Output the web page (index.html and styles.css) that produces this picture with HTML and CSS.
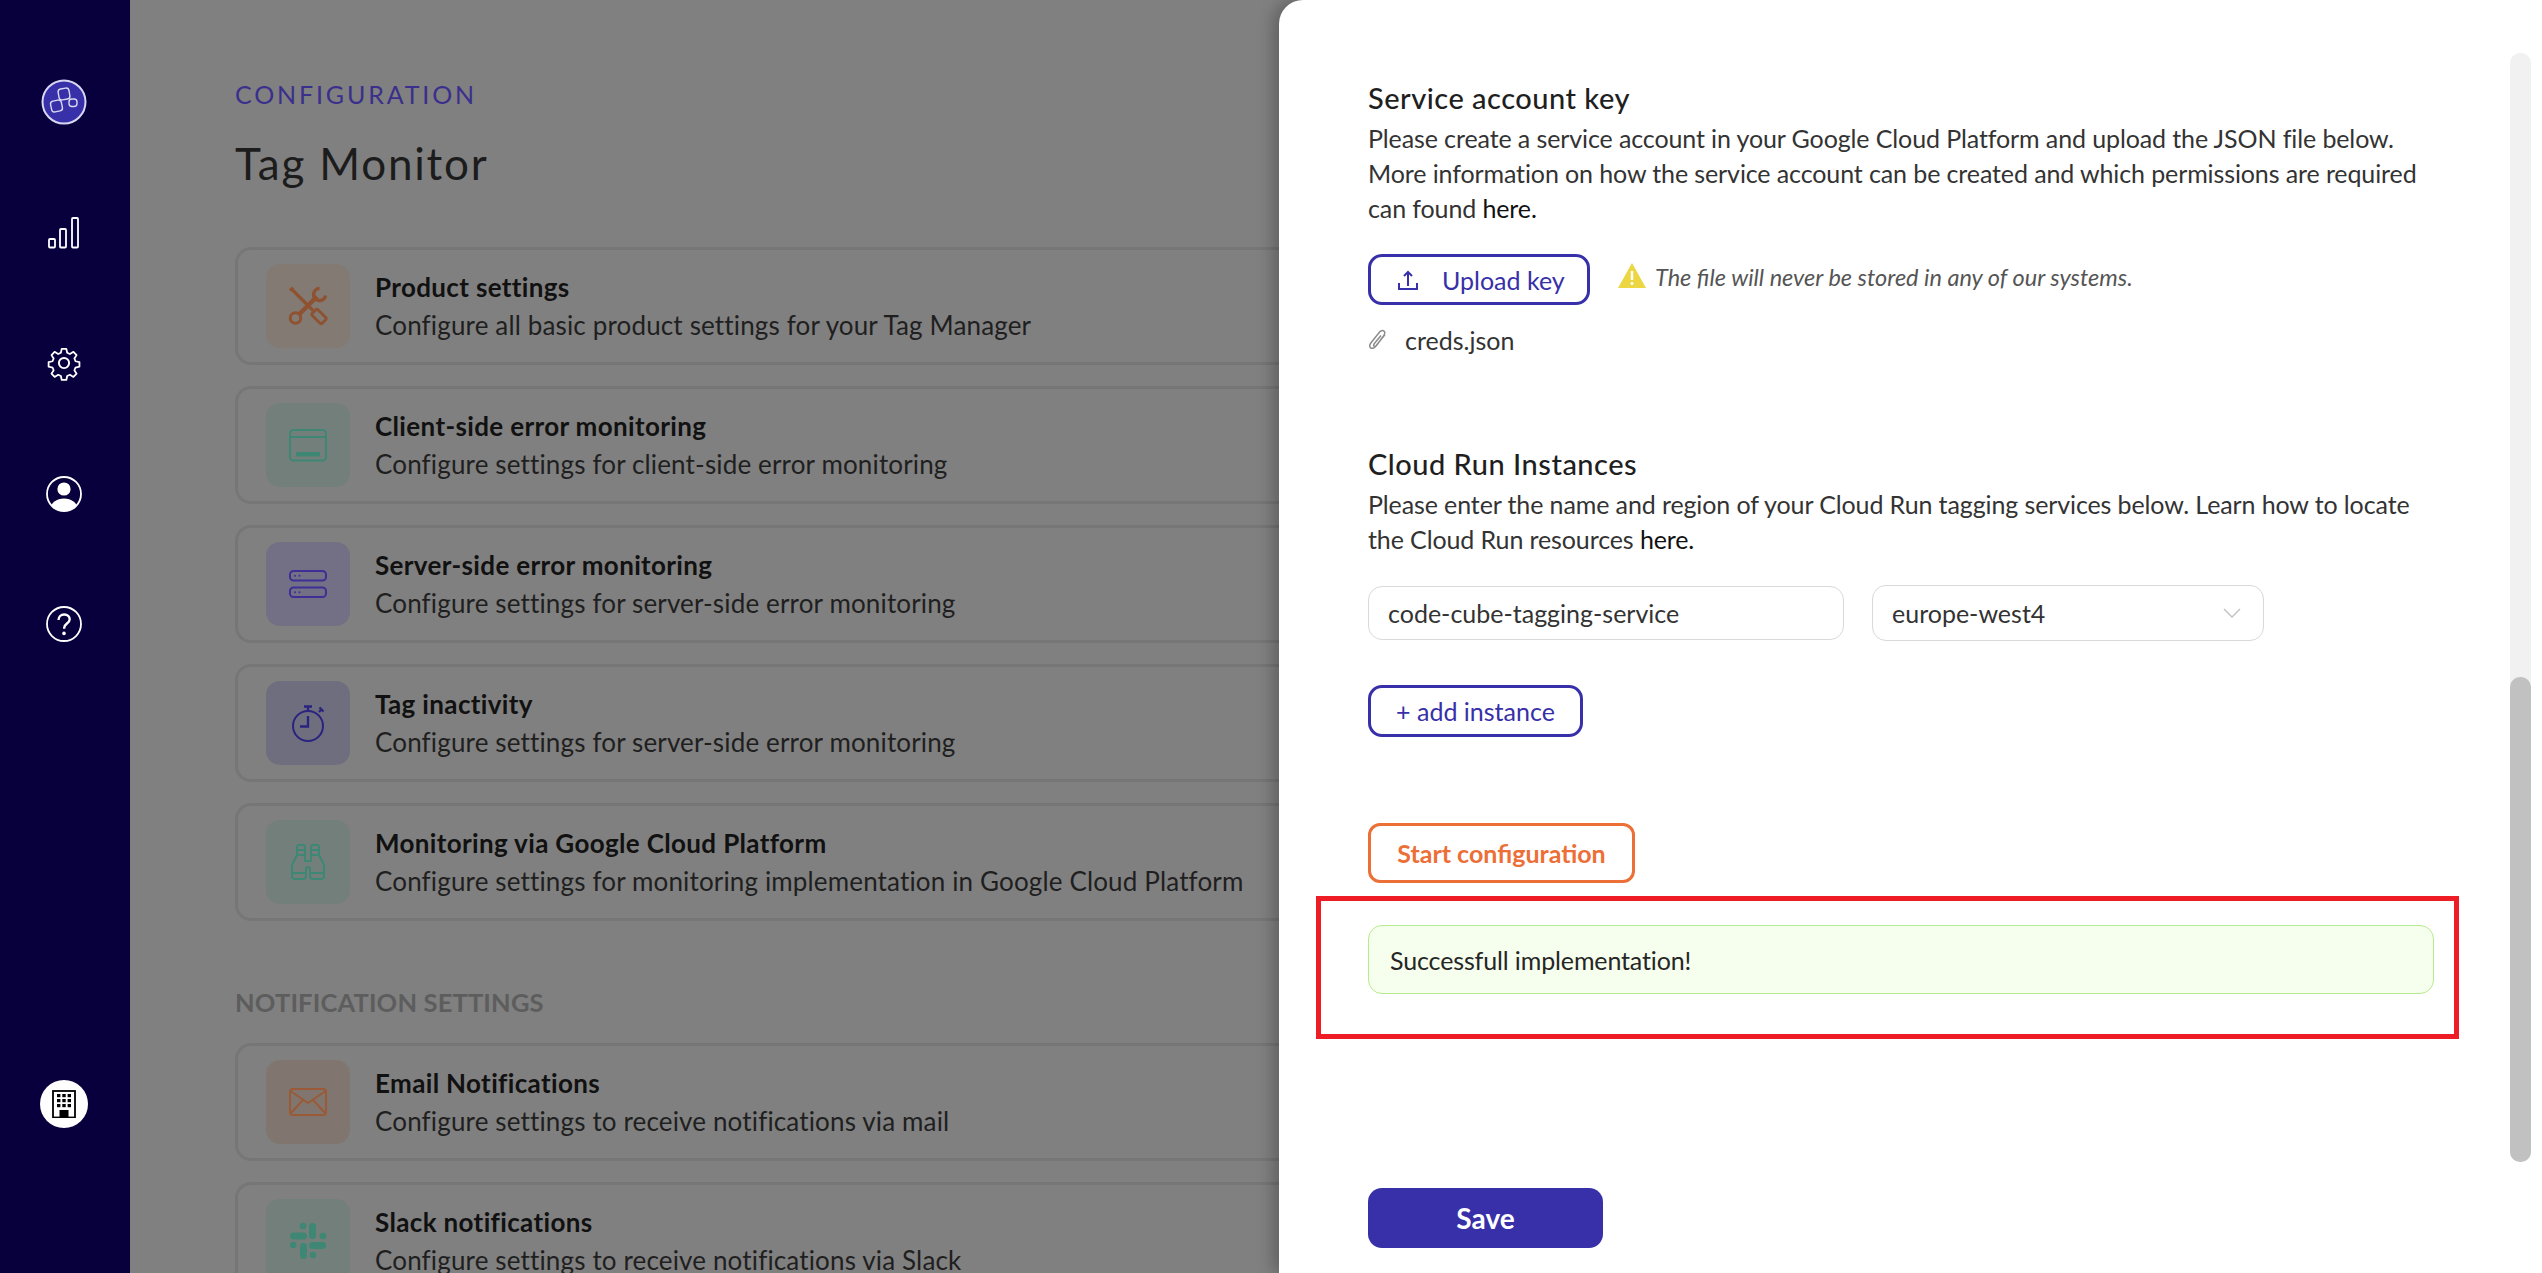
FILE: index.html
```html
<!DOCTYPE html>
<html lang="en">
<head>
<meta charset="utf-8">
<title>Tag Monitor</title>
<link rel="stylesheet" href="styles.css">
</head>
<body>
<div class="app">
  <nav class="sidebar">
    <div class="nav-item">
      <svg class="logo" width="46" height="46" viewBox="0 0 46 46"><circle cx="23" cy="23" r="21.5" fill="#3730a8" stroke="#d9d8f2" stroke-width="2"/><g fill="none" stroke="#d9d8f2" stroke-width="1.4"><rect x="17.5" y="9.5" width="11" height="11" rx="3" transform="rotate(-10 23 15)"/><rect x="10" y="21.5" width="11" height="11" rx="3" transform="rotate(-12 15.5 27)"/><rect x="28" y="20" width="8" height="7.5" rx="3"/></g></svg>
    </div>
    <div class="nav-item">
      <svg width="32" height="32" viewBox="0 0 32 32" fill="none" stroke="#fff" stroke-width="1.8"><rect x="1" y="22" width="6" height="8.5" rx="1"/><rect x="12" y="12" width="6" height="18.5" rx="1"/><rect x="24" y="1" width="6" height="29.5" rx="1"/></svg>
    </div>
    <div class="nav-item">
      <svg width="36" height="36" viewBox="0 0 24 24" fill="none" stroke="#fff" stroke-width="1.3" stroke-linejoin="round"><circle cx="12" cy="12" r="3.4"/><path d="M10.3 1.6h3.4l.6 2.9 2 .9 2.6-1.6 2.3 2.4-1.6 2.5.8 2 2.9.6v3.4l-2.9.6-.8 2 1.6 2.5-2.3 2.4-2.6-1.6-2 .9-.6 2.9h-3.4l-.6-2.9-2-.9-2.6 1.6-2.3-2.4 1.6-2.5-.8-2-2.9-.6v-3.4l2.9-.6.8-2-1.6-2.5 2.3-2.4 2.6 1.6 2-.9z" transform="translate(1.1 1.1) scale(.91)"/></svg>
    </div>
    <div class="nav-item">
      <svg width="36" height="36" viewBox="0 0 36 36"><defs><clipPath id="uc"><circle cx="18" cy="18" r="17"/></clipPath></defs><circle cx="18" cy="18" r="17" fill="none" stroke="#fff" stroke-width="1.8"/><circle cx="18" cy="13" r="6.6" fill="#fff"/><ellipse cx="18" cy="33" rx="13.5" ry="10.5" fill="#fff" clip-path="url(#uc)"/></svg>
    </div>
    <div class="nav-item">
      <svg width="36" height="36" viewBox="0 0 36 36" fill="none" stroke="#fff" stroke-width="1.8"><circle cx="18" cy="18" r="17"/><path d="M12.5 14c0-3.3 2.4-5.5 5.700-5.500s5.500 2 5.500 4.700c0 4.400-5.500 4.200-5.500 8.600v1" stroke-width="2.400"/><circle cx="18" cy="27.400" r="1.800" fill="#fff" stroke="none"/></svg>
    </div>
    <div class="nav-org">
      <svg width="24" height="28" viewBox="0 0 24 28"><rect x="1" y="1" width="22" height="26.500" fill="none" stroke="#000" stroke-width="1.800"/><g fill="#000"><rect x="5" y="4" width="3.400" height="3.200"/><rect x="10.300" y="4" width="3.400" height="3.200"/><rect x="15.600" y="4" width="3.400" height="3.200"/><rect x="5" y="9" width="3.400" height="3.200"/><rect x="10.300" y="9" width="3.400" height="3.200"/><rect x="15.600" y="9" width="3.400" height="3.200"/><rect x="5" y="14" width="3.400" height="3.200"/><rect x="10.300" y="14" width="3.400" height="3.200"/><rect x="15.600" y="14" width="3.400" height="3.200"/><rect x="7.500" y="20" width="9" height="7.500"/></g></svg>
    </div>
  </nav>

  <main class="main">
    <div class="eyebrow">CONFIGURATION</div>
    <h1 class="page-title">Tag Monitor</h1>

    <section class="card-list">
      <div class="card">
        <div class="tile tile-orange">
          <svg width="40" height="40" viewBox="0 0 40 40" fill="none" stroke="#8f5230"><path d="M3.500 3L25 24.500" stroke-width="3.200"/><path d="M2 4.500L5 1.500" stroke-width="3"/><rect x="24" y="26.500" width="14" height="8" rx="1.500" transform="rotate(45 31 30.500)" stroke-width="2.800"/><path d="M29 10.500L11.500 28" stroke-width="4.500"/><circle cx="7.500" cy="32" r="5.300" stroke-width="3"/><path d="M37.500 9.500A6 6 0 1 1 31.500 2.500" stroke-width="3.600"/></svg>
        </div>
        <div class="card-text"><div class="card-title">Product settings</div><div class="card-sub">Configure all basic product settings for your Tag Manager</div></div>
      </div>
      <div class="card">
        <div class="tile tile-green">
          <svg width="40" height="40" viewBox="0 0 40 40" fill="none" stroke="#3e8775" stroke-width="2"><rect x="2" y="5" width="36" height="30.500" rx="3.500"/><path d="M2 12h36"/><rect x="8" y="27" width="24" height="4.500" fill="#3e8775" stroke="none"/></svg>
        </div>
        <div class="card-text"><div class="card-title">Client-side error monitoring</div><div class="card-sub">Configure settings for client-side error monitoring</div></div>
      </div>
      <div class="card">
        <div class="tile tile-violet">
          <svg width="40" height="40" viewBox="0 0 40 40" fill="none" stroke="#3d2f96" stroke-width="2"><rect x="2" y="7" width="36" height="9.500" rx="3.500"/><rect x="2" y="23.500" width="36" height="9.500" rx="3.500"/><g fill="#3d2f96" stroke="none"><circle cx="7" cy="11.700" r="1"/><circle cx="11.500" cy="11.700" r="1"/><circle cx="7" cy="28.200" r="1"/><circle cx="11.500" cy="28.200" r="1"/></g></svg>
        </div>
        <div class="card-text"><div class="card-title">Server-side error monitoring</div><div class="card-sub">Configure settings for server-side error monitoring</div></div>
      </div>
      <div class="card">
        <div class="tile tile-indigo">
          <svg width="40" height="40" viewBox="0 0 40 40" fill="none" stroke="#2a2380" stroke-width="2"><circle cx="20" cy="23" r="15"/><path d="M20 13v10.500h-8M20 8V4M16 3.500h8M31 9l2.500-2.500M31.500 4.500l4 4" stroke-width="2.300"/></svg>
        </div>
        <div class="card-text"><div class="card-title">Tag inactivity</div><div class="card-sub">Configure settings for server-side error monitoring</div></div>
      </div>
      <div class="card">
        <div class="tile tile-green">
          <svg width="40" height="40" viewBox="0 0 40 40" fill="none" stroke="#3e8775" stroke-width="2" stroke-linejoin="round"><path d="M9 13V5a2 2 0 0 1 2-2h4a2 2 0 0 1 2 2v8M23 13V5a2 2 0 0 1 2-2h4a2 2 0 0 1 2 2v8M9 8h8M23 8h8"/><path d="M9 13L4 23V34a3 3 0 0 0 3 3h8a3 3 0 0 0 3-3V27a2 2 0 0 1 4 0V34a3 3 0 0 0 3 3h8a3 3 0 0 0 3-3V23L31 13H23V19H17V13Z"/><path d="M4 31H18M22 31H36"/></svg>
        </div>
        <div class="card-text"><div class="card-title">Monitoring via Google Cloud Platform</div><div class="card-sub">Configure settings for monitoring implementation in Google Cloud Platform</div></div>
      </div>
    </section>

    <h2 class="section-label">NOTIFICATION SETTINGS</h2>

    <section class="card-list">
      <div class="card">
        <div class="tile tile-peach">
          <svg width="40" height="40" viewBox="0 0 40 40" fill="none" stroke="#9a5a38" stroke-width="2"><rect x="2" y="7" width="36" height="26" rx="3"/><path d="M2.500 9L20 21 37.500 9M2.500 31.500L15 18M37.500 31.500L25 18"/></svg>
        </div>
        <div class="card-text"><div class="card-title">Email Notifications</div><div class="card-sub">Configure settings to receive notifications via mail</div></div>
      </div>
      <div class="card">
        <div class="tile tile-green">
          <svg width="40" height="40" viewBox="0 0 40 40" fill="#3e8775"><rect x="21" y="2" width="7" height="16" rx="3.500"/><rect x="2" y="11.500" width="17" height="7" rx="3.500"/><rect x="21" y="21" width="17" height="7" rx="3.500"/><rect x="12" y="22" width="7" height="16" rx="3.500"/><circle cx="15" cy="5" r="3.300"/><circle cx="35" cy="15" r="3.300"/><circle cx="5.300" cy="24" r="3.300"/><circle cx="25" cy="34" r="3.300"/></svg>
        </div>
        <div class="card-text"><div class="card-title">Slack notifications</div><div class="card-sub">Configure settings to receive notifications via Slack</div></div>
      </div>
    </section>
  </main>

  <aside class="drawer">
    <div class="drawer-body">
      <h3 class="block-title">Service account key</h3>
      <p class="block-text">Please create a service account in your Google Cloud Platform and upload the JSON file below.<br>More information on how the service account can be created and which permissions are required<br>can found <span class="link">here.</span></p>
      <div class="upload-row">
        <button class="btn btn-outline btn-upload">
          <svg width="24" height="24" viewBox="0 0 24 24" fill="none" stroke="#3730a8" stroke-width="2"><path d="M12 18V4M8 8l4-4 4 4M3 15v6h18v-6"/></svg>
          <span>Upload key</span>
        </button>
        <svg class="warn" width="28" height="25" viewBox="0 0 28 25"><path d="M14 0L28 25H0z" fill="#ecd641"/><path d="M14 8v9" stroke="#fff" stroke-width="2.500"/><circle cx="14" cy="20.500" r="1.500" fill="#fff"/></svg>
        <em class="note">The file will never be stored in any of our systems.</em>
      </div>
      <div class="file-row">
        <svg width="20" height="22" viewBox="0 0 20 22" fill="none" stroke="#8c8c8c" stroke-width="1.500"><path d="M17 5.500L7.500 17.500c-1.500 2-4 2.300-5 1.200-1.200-1.300-.8-3.300.5-5l8-10c1.500-2 3.700-2.700 5-1.600 1.300 1.200.7 3.200-.5 4.900L8.500 16.500c-.8 1-2 1.200-2.500.6-.6-.6-.3-1.700.4-2.600L13 6.500"/></svg>
        <span>creds.json</span>
      </div>

      <h3 class="block-title block-title-second">Cloud Run Instances</h3>
      <p class="block-text">Please enter the name and region of your Cloud Run tagging services below. Learn how to locate<br>the Cloud Run resources <span class="link">here.</span></p>
      <div class="instance-row">
        <div class="field field-name">code-cube-tagging-service</div>
        <div class="field field-region"><span>europe-west4</span>
          <svg width="18" height="10" viewBox="0 0 18 10" fill="none" stroke="#bfbfbf" stroke-width="1.300"><path d="M1 1l8 8 8-8"/></svg>
        </div>
      </div>
      <button class="btn btn-outline btn-add">+ add instance</button>
      <button class="btn btn-start">Start configuration</button>
      <div class="alert">Successfull implementation!</div>
      <button class="btn btn-save">Save</button>
    </div>
    <div class="highlight"></div>
    <div class="scrollbar"><div class="scroll-thumb"></div></div>
  </aside>
</div>
</body>
</html>
```

FILE: styles.css
```css
* { box-sizing: border-box; }
html, body { margin: 0; height: 100%; overflow: hidden; }
body { font-family: "Lato", "Open Sans", sans-serif; color: #262626; background: #808080; }
.app { display: flex; height: 1273px; position: relative; overflow: hidden; }

.sidebar { width: 130px; flex: none; background: #08003d; display: flex; flex-direction: column; align-items: center; padding: 74px 3px 145px 0; }
.nav-item { height: 130.5px; display: flex; justify-content: center; align-items: flex-start; }
.nav-item:nth-child(1) { padding-top: 5px; }
.nav-item:nth-child(2) { padding-top: 12px; }
.nav-item:nth-child(n+3) { padding-top: 10px; }
.nav-org { margin-top: auto; width: 48px; height: 48px; border-radius: 50%; background: #fff; display: flex; align-items: center; justify-content: center; }

.main { flex: 1; padding: 82px 0 0 105px; min-width: 0; overflow: hidden; background: #808080; color: #1c1c1c; }
.eyebrow { font-size: 25px; line-height: 24px; letter-spacing: 2.85px; color: #3a2f8c; }
.page-title { margin: 31px 0 0; font-size: 44px; line-height: 52px; font-weight: 400; letter-spacing: 1.8px; color: #1c1c1c; }

.card-list { display: flex; flex-direction: column; gap: 21px; width: 1400px; }
.page-title + .card-list { margin-top: 58px; }
.card { height: 118px; border: 3px solid #767676; border-radius: 16px; padding: 14px 0 0 28px; display: flex; gap: 25px; }
.tile { width: 84px; height: 84px; border-radius: 14px; flex: none; display: flex; align-items: center; justify-content: center; }
.tile-orange { background: #827a73; }
.tile-peach { background: #80766f; }
.tile-green { background: #727f7a; }
.tile-violet { background: #736f84; }
.tile-indigo { background: #6e6e7e; }
.card-text { padding-top: 5px; }
.card-title { font-size: 26px; line-height: 37px; font-weight: 700; letter-spacing: .35px; color: #111; }
.card-sub { font-size: 26px; line-height: 38px; letter-spacing: .15px; color: #1f1f1f; }

.section-label { margin: 65px 0 25px; font-size: 25.500px; line-height: 32px; font-weight: 700; letter-spacing: .15px; color: #5d5d5d; }

.drawer { position: absolute; top: 0; right: 0; bottom: 0; left: 1279px; background: #fff; border-top-left-radius: 24px; box-shadow: -6px 0 16px rgba(0,0,0,.25); overflow: hidden; }
.drawer-body { padding: 78px 0 0 89px; }
.block-title { margin: 0; font-size: 29px; line-height: 40px; font-weight: 500; letter-spacing: .5px; color: #1f1f1f; }
.block-title-second { margin-top: 88px; }
.block-text { margin: 3px 0 0; font-size: 25px; line-height: 35px; letter-spacing: -.11px; color: #333; }
.link { color: #111; }

.btn { font-family: inherit; background: #fff; padding: 0; cursor: pointer; display: flex; align-items: center; }
.btn-outline { border: 3px solid #3730a8; border-radius: 14px; color: #3730a8; font-size: 25px; }
.upload-row { display: flex; align-items: center; margin-top: 28px; }
.btn-upload { width: 222px; height: 51px; gap: 22px; padding-left: 25px; }
.warn { margin: -8px 0 0 28px; }
.note { margin: -5px 0 0 9px; font-size: 23.500px; color: #555; }
.file-row { display: flex; align-items: center; gap: 17px; margin-top: 19px; font-size: 25px; line-height: 32px; color: #333; }
.instance-row { display: flex; align-items: center; gap: 28px; margin-top: 28px; }
.field { border: 1px solid #d9d9d9; border-radius: 14px; font-size: 25px; padding-left: 19px; display: flex; align-items: center; color: #333; }
.field-name { width: 476px; height: 54px; }
.field-region { width: 392px; height: 56px; justify-content: space-between; padding-right: 22px; }
.btn-add { width: 215px; height: 52px; justify-content: center; margin-top: 44px; }
.btn-start { width: 267px; height: 60px; justify-content: center; margin-top: 86px; border: 3px solid #ec6f37; border-radius: 12px; color: #ec6f37; font-size: 25px; font-weight: 700; }
.alert { width: 1066px; height: 69px; margin-top: 42px; background: #f6ffed; border: 1px solid #b7eb8f; border-radius: 14px; padding-left: 21px; display: flex; align-items: center; font-size: 25px; letter-spacing: -.13px; color: #262626; }
.btn-save { width: 235px; height: 60px; justify-content: center; margin-top: 194px; border: 0; border-radius: 14px; background: #3730a8; color: #fff; font-size: 28px; font-weight: 700; }

.highlight { position: absolute; left: 37px; top: 896px; width: 1143px; height: 143px; border: 5px solid #ee1c25; pointer-events: none; }
.scrollbar { position: absolute; top: 53px; left: 1231px; width: 21px; height: 1109px; background: #f1f1f1; border-radius: 10px; }
.scroll-thumb { position: absolute; left: 0; right: 0; bottom: 0; height: 485px; background: #c1c1c1; border-radius: 10px; }
```
